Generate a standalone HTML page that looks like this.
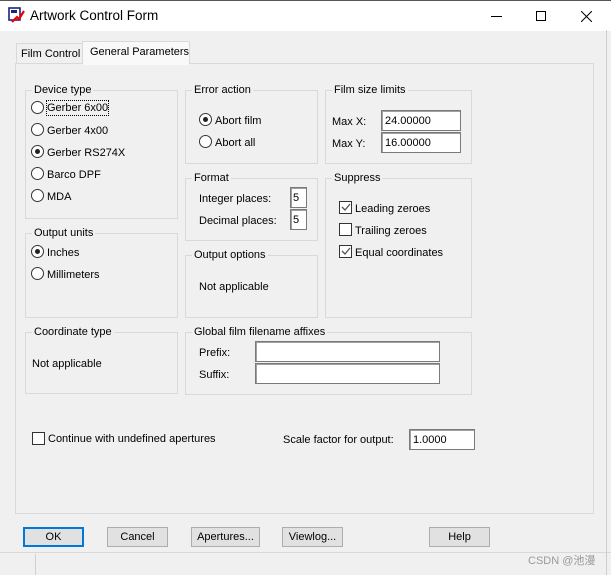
<!DOCTYPE html>
<html><head><meta charset="utf-8"><style>
*{box-sizing:border-box;margin:0;padding:0}
body{width:611px;height:575px;background:#f0f0f0;font-family:"Liberation Sans",sans-serif;font-size:11px;line-height:17px;color:#000;position:relative;overflow:hidden}
.a{position:absolute;white-space:nowrap}
.title{position:absolute;left:0;top:0;width:611px;height:31px;background:#fff;border-top:1px solid #555}
.grp{position:absolute;border:1px solid #d9d9d9;border-radius:0}
.grp>span{position:absolute;top:-8px;left:6px;background:#f0f0f0;padding:0 2px;line-height:14px}
.rad{position:absolute;width:13px;height:13px;border:1px solid #333;border-radius:50%;background:#fff}
.rad.on::after{content:"";position:absolute;left:3px;top:3px;width:5px;height:5px;border-radius:50%;background:#222}
.chk{position:absolute;width:13px;height:13px;border:1px solid #333;background:#fff}
.inp{position:absolute;background:#fff;border:1px solid #7a7a7a;box-shadow:inset 1px 1px 0 #a0a0a0;padding:1px 0 0 3px;line-height:18px}
.btn{position:absolute;top:527px;height:20px;border:1px solid #adadad;background:#e1e1e1;text-align:center;line-height:18px}
</style></head><body>
<div class="title">
<svg class="a" style="left:8px;top:6px" width="17" height="17" viewBox="0 0 17 17"><rect x="1" y="1" width="11" height="12" fill="#fff" stroke="#1a237e" stroke-width="1.6"/><rect x="3" y="3" width="6" height="3" fill="#1a237e"/><path d="M4 15 L9 10 L11 12 L16 4" stroke="#e00" stroke-width="2.2" fill="none"/></svg>
<div class="a" style="left:30px;top:6px;font-size:13.5px">Artwork Control Form</div>
<div class="a" style="left:491px;top:15px;width:11px;height:1px;background:#000"></div>
<div class="a" style="left:536px;top:10px;width:10px;height:10px;border:1px solid #000"></div>
<svg class="a" style="left:581px;top:10px" width="11" height="11"><path d="M0 0L11 11M11 0L0 11" stroke="#000" stroke-width="1"/></svg>
</div>
<div class="a" style="left:16px;top:43px;width:67px;height:21px;border:1px solid #d9d9d9;border-bottom:none;padding:2px 0 0 4px">Film Control</div>
<div class="a" style="left:82px;top:41px;width:108px;height:24px;border:1px solid #d9d9d9;border-bottom:none;background:#f9f9f9;padding:2px 0 0 7px">General Parameters</div>
<div class="a" style="left:15px;top:63px;width:579px;height:451px;border:1px solid #d9d9d9;background:#f0f0f0"></div>
<div class="a" style="left:83px;top:63px;width:106px;height:2px;background:#f9f9f9"></div>

<div class="grp" style="left:25px;top:90px;width:153px;height:129px"><span>Device type</span></div>
<div class="rad" style="left:31px;top:101px"></div><div class="a" style="left:47px;top:101px;line-height:14px;outline:1px dotted #000">Gerber 6x00</div>
<div class="rad" style="left:31px;top:123px"></div><div class="a" style="left:47px;top:123px">Gerber 4x00</div>
<div class="rad on" style="left:31px;top:145px"></div><div class="a" style="left:47px;top:145px">Gerber RS274X</div>
<div class="rad" style="left:31px;top:167px"></div><div class="a" style="left:47px;top:167px">Barco DPF</div>
<div class="rad" style="left:31px;top:189px"></div><div class="a" style="left:47px;top:189px">MDA</div>

<div class="grp" style="left:25px;top:233px;width:153px;height:85px"><span>Output units</span></div>
<div class="rad on" style="left:31px;top:245px"></div><div class="a" style="left:47px;top:245px">Inches</div>
<div class="rad" style="left:31px;top:267px"></div><div class="a" style="left:47px;top:267px">Millimeters</div>

<div class="grp" style="left:25px;top:332px;width:153px;height:62px"><span>Coordinate type</span></div>
<div class="a" style="left:32px;top:356px">Not applicable</div>

<div class="grp" style="left:185px;top:90px;width:133px;height:74px"><span>Error action</span></div>
<div class="rad on" style="left:199px;top:113px"></div><div class="a" style="left:215px;top:113px">Abort film</div>
<div class="rad" style="left:199px;top:135px"></div><div class="a" style="left:215px;top:135px">Abort all</div>

<div class="grp" style="left:185px;top:178px;width:133px;height:63px"><span>Format</span></div>
<div class="a" style="left:199px;top:191px">Integer places:</div>
<div class="inp" style="left:290px;top:187px;width:17px;height:21px;padding-left:2px">5</div>
<div class="a" style="left:199px;top:213px">Decimal places:</div>
<div class="inp" style="left:290px;top:209px;width:17px;height:21px;padding-left:2px">5</div>

<div class="grp" style="left:185px;top:255px;width:133px;height:63px"><span>Output options</span></div>
<div class="a" style="left:199px;top:279px">Not applicable</div>

<div class="grp" style="left:185px;top:332px;width:287px;height:63px"><span>Global film filename affixes</span></div>
<div class="a" style="left:199px;top:345px">Prefix:</div>
<div class="inp" style="left:255px;top:341px;width:185px;height:21px"></div>
<div class="a" style="left:199px;top:367px">Suffix:</div>
<div class="inp" style="left:255px;top:363px;width:185px;height:21px"></div>

<div class="grp" style="left:325px;top:90px;width:147px;height:74px"><span>Film size limits</span></div>
<div class="a" style="left:332px;top:114px">Max X:</div>
<div class="inp" style="left:381px;top:110px;width:80px;height:21px">24.00000</div>
<div class="a" style="left:332px;top:136px">Max Y:</div>
<div class="inp" style="left:381px;top:132px;width:80px;height:21px">16.00000</div>

<div class="grp" style="left:325px;top:178px;width:147px;height:140px"><span>Suppress</span></div>
<div class="chk" style="left:339px;top:201px"></div><svg class="a" style="left:341px;top:203px" width="10" height="9"><path d="M1 4L4 7L9 1" stroke="#555" stroke-width="1.3" fill="none"/></svg><div class="a" style="left:355px;top:201px">Leading zeroes</div>
<div class="chk" style="left:339px;top:223px"></div><div class="a" style="left:355px;top:223px">Trailing zeroes</div>
<div class="chk" style="left:339px;top:245px"></div><svg class="a" style="left:341px;top:247px" width="10" height="9"><path d="M1 4L4 7L9 1" stroke="#555" stroke-width="1.3" fill="none"/></svg><div class="a" style="left:355px;top:245px">Equal coordinates</div>

<div class="chk" style="left:32px;top:432px"></div><div class="a" style="left:48px;top:431px">Continue with undefined apertures</div>
<div class="a" style="left:283px;top:432px">Scale factor for output:</div>
<div class="inp" style="left:409px;top:429px;width:66px;height:21px">1.0000</div>

<div class="btn" style="left:23px;width:61px;border:2px solid #0078d7;line-height:16px">OK</div>
<div class="btn" style="left:107px;width:61px">Cancel</div>
<div class="btn" style="left:191px;width:69px">Apertures...</div>
<div class="btn" style="left:282px;width:61px">Viewlog...</div>
<div class="btn" style="left:429px;width:61px">Help</div>

<div class="a" style="left:0;top:552px;width:611px;height:1px;background:#d9d9d9"></div>
<div class="a" style="left:35px;top:554px;width:1px;height:21px;background:#d0d0d0"></div>
<div class="a" style="left:528px;top:553px;font-size:11px;color:#999;font-family:'Liberation Sans','Noto Sans CJK SC',sans-serif">CSDN @池漫</div>
<div class="a" style="left:606px;top:30px;width:1px;height:545px;background:#ccc"></div>
</body></html>
